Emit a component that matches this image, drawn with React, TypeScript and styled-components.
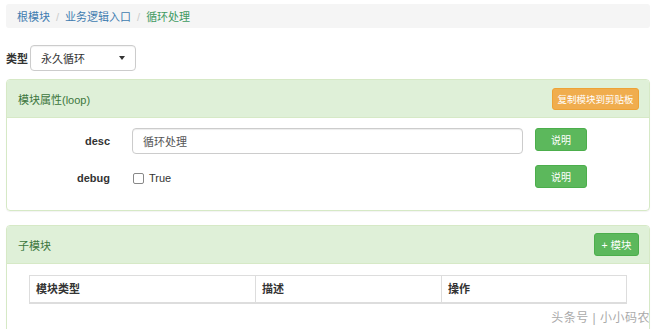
import styled, { createGlobalStyle } from "styled-components";

const GlobalStyle = createGlobalStyle`
  html, body {
    margin: 0;
    padding: 0;
    background: #fff;
  }
  body {
    font-family: "Liberation Sans", "Noto Sans CJK SC", sans-serif;
    font-size: 11px;
    color: #333;
  }
  * {
    box-sizing: border-box;
  }
`;

const Page = styled.div`
  position: relative;
  width: 660px;
  height: 329px;
  overflow: hidden;
  padding: 4px 10px 0 6px;
`;

const Breadcrumb = styled.ol`
  display: flex;
  align-items: center;
  height: 24px;
  margin: 0;
  padding: 0 11px;
  list-style: none;
  background: #f5f5f5;
  border-radius: 3px;

  li:not(:first-child)::before {
    content: "/";
    color: #ccc;
    padding: 0 6px;
  }
`;

const Crumb = styled.li<{ $active?: boolean }>`
  color: ${(p) => (p.$active ? "#3f9a62" : "#3f7cb0")};
`;

const TypeRow = styled.div`
  display: flex;
  align-items: center;
  gap: 2px;
  margin-top: 17px;
  margin-bottom: 8px;
`;

const FieldLabel = styled.span`
  font-weight: bold;
`;

const Select = styled.div`
  display: flex;
  align-items: center;
  justify-content: space-between;
  width: 106px;
  height: 26px;
  padding: 0 10px;
  border: 1px solid #ccc;
  border-radius: 4px;
  box-shadow: inset 0 1px 1px rgba(0, 0, 0, 0.05);
`;

const Caret = styled.span`
  width: 0;
  height: 0;
  border-top: 4px solid #333;
  border-left: 3.5px solid transparent;
  border-right: 3.5px solid transparent;
`;

const Panel = styled.section`
  border: 1px solid #d6e9c6;
  border-radius: 4px;
  box-shadow: 0 1px 1px rgba(0, 0, 0, 0.05);
  & + & {
    margin-top: 14px;
  }
`;

const PanelHeading = styled.div`
  display: flex;
  align-items: center;
  justify-content: space-between;
  height: 38px;
  padding: 0 10px 0 11px;
  background: #dff0d8;
  color: #3c763d;
  border-bottom: 1px solid #d6e9c6;
  border-radius: 3px 3px 0 0;
`;

const Button = styled.button<{
  $color: "green" | "orange";
  $width: number;
  $height?: number;
  $size?: number;
}>`
  height: ${(p) => p.$height ?? 23}px;
  width: ${(p) => p.$width}px;
  padding: 0;
  font: inherit;
  font-size: ${(p) => p.$size ?? 10}px;
  color: #fff;
  border-radius: 3px;
  border: 1px solid ${(p) => (p.$color === "green" ? "#4cae4c" : "#eea236")};
  background: ${(p) => (p.$color === "green" ? "#5cb85c" : "#f0ad4e")};
`;

const FormBody = styled.div`
  display: flex;
  flex-direction: column;
  gap: 11px;
  padding: 10px 0 19px;
`;

const FormRow = styled.div`
  display: flex;
  align-items: flex-start;
`;

const RowLabel = styled.label`
  width: 103px;
  line-height: 26px;
  text-align: right;
  font-weight: bold;
  margin-right: 22px;
`;

const RowField = styled.div`
  display: flex;
  align-items: center;
  width: 391px;
  height: 26px;
  margin-right: 12px;
`;

const TextInput = styled.div`
  display: flex;
  align-items: center;
  width: 100%;
  height: 26px;
  padding: 0 10px;
  border: 1px solid #ccc;
  border-radius: 4px;
  box-shadow: inset 0 1px 1px rgba(0, 0, 0, 0.075);
  color: #555;
`;

const Checkbox = styled.span`
  width: 11px;
  height: 11px;
  margin: 0 5px 0 1px;
  border: 1px solid #888;
  border-radius: 2px;
`;

const TableBody = styled.div`
  padding: 11px 22px 30px;
`;

const Table = styled.div`
  display: grid;
  grid-template-columns: 225px 186px 1fr;
  border: 1px solid #ddd;
`;

const HeadCell = styled.div`
  height: 27px;
  line-height: 27px;
  padding: 0 6px;
  font-weight: bold;
  border-bottom: 1px solid #ddd;
  & + & {
    border-left: 1px solid #ddd;
  }
`;

const Watermark = styled.div`
  position: absolute;
  right: 10px;
  bottom: 4px;
  font-size: 12px;
  color: #aaa;
  letter-spacing: 0.5px;
  text-shadow: 0 0 1px #fff;
`;

export default function App() {
  return (
    <>
      <GlobalStyle />
      <Page>
        <Breadcrumb>
          <Crumb>根模块</Crumb>
          <Crumb>业务逻辑入口</Crumb>
          <Crumb $active>循环处理</Crumb>
        </Breadcrumb>
        <TypeRow>
          <FieldLabel>类型</FieldLabel>
          <Select>
            <span>永久循环</span>
            <Caret />
          </Select>
        </TypeRow>
        <Panel>
          <PanelHeading>
            <span>模块属性(loop)</span>
            <Button $color="orange" $width={87} $height={22} $size={9.5}>
              复制模块到剪贴板
            </Button>
          </PanelHeading>
          <FormBody>
            <FormRow>
              <RowLabel>desc</RowLabel>
              <RowField>
                <TextInput>循环处理</TextInput>
              </RowField>
              <Button $color="green" $width={52}>说明</Button>
            </FormRow>
            <FormRow>
              <RowLabel>debug</RowLabel>
              <RowField>
                <Checkbox />
                <span>True</span>
              </RowField>
              <Button $color="green" $width={52}>说明</Button>
            </FormRow>
          </FormBody>
        </Panel>
        <Panel>
          <PanelHeading>
            <span>子模块</span>
            <Button $color="green" $width={45} $size={10.5}>+ 模块</Button>
          </PanelHeading>
          <TableBody>
            <Table>
              <HeadCell>模块类型</HeadCell>
              <HeadCell>描述</HeadCell>
              <HeadCell>操作</HeadCell>
            </Table>
          </TableBody>
        </Panel>
        <Watermark>头条号 | 小小码农</Watermark>
      </Page>
    </>
  );
}
